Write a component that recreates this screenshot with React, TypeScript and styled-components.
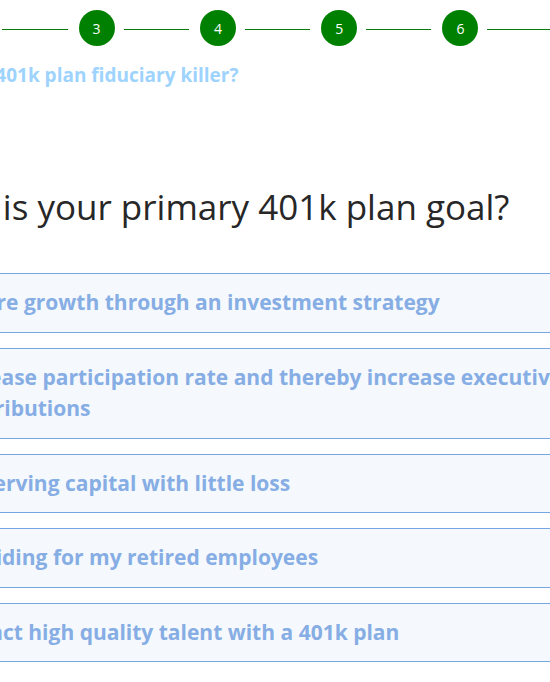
import styled, { createGlobalStyle } from "styled-components";

const GlobalStyle = createGlobalStyle`
	html, body {
		margin: 0;
		padding: 0;
		background: #fff;
		overflow: hidden;
	}
	body {
		font-family: "Open Sans", "Noto Sans", sans-serif;
		color: #222;
	}
`;

const Page = styled.div`
	width: 550px;
	height: 682px;
	overflow: hidden;
`;

const Stepper = styled.div`
	display: flex;
	align-items: center;
	margin: 10px 0 0 -164px;
	width: 1100px;
`;

const StepCircle = styled.div`
	flex: none;
	width: 36px;
	height: 36px;
	border-radius: 50%;
	background: #008000;
	color: #fff;
	font-size: 14px;
	display: flex;
	align-items: center;
	justify-content: center;
`;

const StepLine = styled.div`
	flex: none;
	width: 65.3px;
	height: 1px;
	margin: 2px 11px 0 9px;
	background: #0a7a0a;
`;

const Content = styled.div`
	margin-left: -70px;
	width: 700px;
`;

const Subtitle = styled.p`
	margin: 16px 0 0 -4px;
	font-size: 19px;
	font-weight: 700;
	line-height: 27px;
	color: #9dd3fd;
`;

const Title = styled.h1`
	margin: 96px 0 0 -22px;
	font-size: 35px;
	font-weight: 400;
	line-height: 44px;
	color: #272727;
`;

const Options = styled.div`
	display: flex;
	flex-direction: column;
	gap: 15px;
	margin-top: 44px;
`;

const Option = styled.button`
	display: block;
	width: 100%;
	text-align: left;
	padding: 13px 12px 13px 17px;
	border: 1px solid #74a6e2;
	background: #f5f9fd;
	font-family: inherit;
	font-size: 21px;
	font-weight: 700;
	line-height: 31.5px;
	color: #86ade4;
	cursor: pointer;
`;

const steps = [1, 2, 3, 4, 5, 6, 7];

const goals = [
	"Secure growth through an investment strategy",
	"Increase participation rate and thereby increase executive contributions",
	"Preserving capital with little loss",
	"Providing for my retired employees",
	"Attract high quality talent with a 401k plan",
];

function App() {
	return (
		<Page>
			<GlobalStyle />
			<Stepper>
				{steps.map((n, i) => (
					<>
						{i > 0 && <StepLine key={"l" + n} />}
						<StepCircle key={n}>{n}</StepCircle>
					</>
				))}
				<StepLine />
			</Stepper>
			<Content>
				<Subtitle>Is your 401k plan fiduciary killer?</Subtitle>
				<Title>What is your primary 401k plan goal?</Title>
				<Options>
					{goals.map((g) => (
						<Option key={g}>{g}</Option>
					))}
				</Options>
			</Content>
		</Page>
	);
}

export default App;
